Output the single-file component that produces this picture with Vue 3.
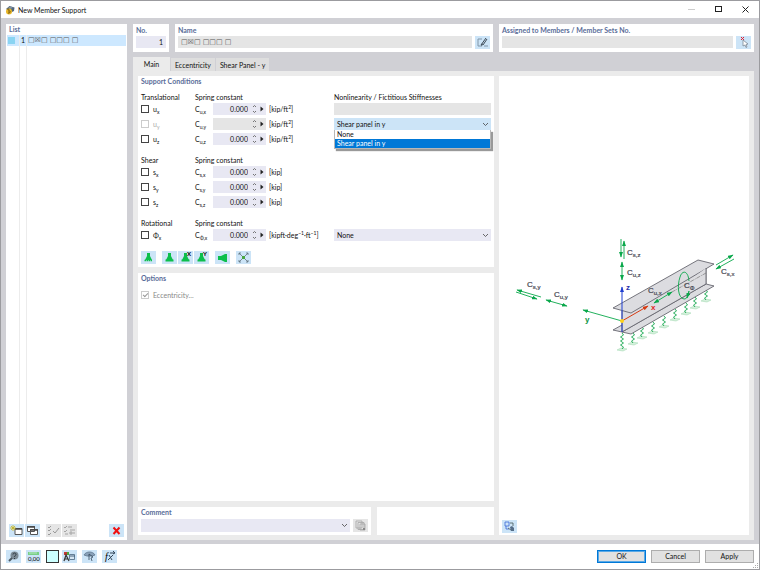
<template>
  <div class="dialog">
    <header class="title-bar">
      <svg class="app-icon" viewBox="0 0 20 20">
        <path d="M2 8 L9 2 L19 5 L18 12 L12 15 Z" fill="#50647a" />
        <path d="M6 5 L12 3 L16 6 L10 8 Z" fill="#8194a6" />
        <circle cx="8" cy="13" r="6" fill="#e9b727" />
        <path d="M5 9 C8 7 10 11 7 12 C12 11 11 17 6 16" fill="none" stroke="#6f5413" stroke-width="2" />
      </svg>
      <h1>New Member Support</h1>
      <div class="window-buttons">
        <button aria-label="Minimize" disabled>
          <svg viewBox="0 0 9 9"><path d="M1 4.5 H8" stroke="#ccc" /></svg>
        </button>
        <button aria-label="Maximize">
          <svg viewBox="0 0 9 9"><rect x="1.5" y="1.5" width="6" height="5" fill="none" stroke="#222" /></svg>
        </button>
        <button aria-label="Close">
          <svg viewBox="0 0 9 9"><path d="M1.5 1.5 L7.5 7.5 M7.5 1.5 L1.5 7.5" stroke="#222" /></svg>
        </button>
      </div>
    </header>

    <div class="body">
      <aside class="panel list-panel">
        <h2>List</h2>
        <ul class="support-list">
          <li v-for="item in supports" :key="item.no" class="selected">
            <span class="swatch"></span>
            <span class="item-no">{{ item.no }}</span>
            <span class="item-name boxes">{{ item.name }}</span>
          </li>
          <li class="filler"><span></span><span></span><span></span></li>
        </ul>
        <div class="tools list-tools">
          <button class="tool" aria-label="New">
            <svg viewBox="0 0 15 13">
              <path d="M6 4.500 h7 v6 h-7 z" fill="#fff" stroke="#555" />
              <path d="M6 5 h7" stroke="#444" stroke-width="1.500" />
              <path d="M4 1 v6 M1 4 h6 M2 2 l4 4 M6 2 l-4 4" stroke="#c9b51e" stroke-width="0.8" />
            </svg>
          </button>
          <button class="tool" aria-label="Copy">
            <svg viewBox="0 0 15 13">
              <path d="M2.500 2.500 h7 v5 h-7 z M5.500 5.500 h7 v5 h-7 z" fill="#fff" stroke="#555" />
              <path d="M2 3 h8 M5 6 h8" stroke="#444" stroke-width="1.500" />
            </svg>
          </button>
          <button class="tool off gap-before" aria-label="Select all" disabled>
            <svg viewBox="0 0 15 13">
              <path d="M2 3 l1 1 l2 -2 M2 6 l1 1 l2 -2 M2 10 l1 1 l2 -2 M7 7 l2 2 l4 -5" fill="none" stroke="#999" />
            </svg>
          </button>
          <button class="tool off" aria-label="Invert selection" disabled>
            <svg viewBox="0 0 15 13">
              <path d="M2 3 l1 1 l2 -2 M6 3 h4 M2 7 l1 1 l2 -2 M3 10 h3 M8 6 h5 M8 8 h2 v2 h-2 z M11 9 h2" fill="none" stroke="#a5a5a5" />
            </svg>
          </button>
          <button class="tool push" aria-label="Delete">
            <svg viewBox="0 0 15 13"><path d="M4.500 3.500 L10.500 10 M10.500 3.500 L4.500 10" stroke="#f01010" stroke-width="2" /></svg>
          </button>
        </div>
      </aside>

      <main class="main">
        <div class="head-row">
          <section class="panel">
            <h2><label for="no">No.</label></h2>
            <input id="no" v-model="no" class="field no-field" />
          </section>
          <section class="panel">
            <h2><label for="name">Name</label></h2>
            <div class="field-line">
              <input id="name" v-model="name" class="field gray boxes" readonly />
              <button class="tool" aria-label="Edit name">
                <svg viewBox="0 0 15 13">
                  <path d="M7 3 H3 V10 H7 M9 10 H13" fill="none" stroke="#8196a8" />
                  <path d="M6 9 L11 2 M8 9 L12 3" stroke="#3d4a56" />
                  <path d="M6 10 l1 -3 l1 2 z" fill="#3d4a56" />
                </svg>
              </button>
            </div>
          </section>
          <section class="panel">
            <h2><label for="assigned">Assigned to Members / Member Sets No.</label></h2>
            <div class="field-line">
              <input id="assigned" class="field gray" readonly />
              <button class="tool" aria-label="Pick members">
                <svg viewBox="0 0 15 13">
                  <path d="M5 1 L8 4 M8 1 L5 4" stroke="#e02030" />
                  <path d="M7 4 L12 8 L10 8.500 L11 11 L10 11.500 L9 9 L7 10 Z" fill="#fff" stroke="#7c8896" stroke-width="0.8" />
                </svg>
              </button>
            </div>
          </section>
        </div>

        <nav class="tabs" role="tablist">
          <button
            v-for="tab in tabs"
            :key="tab"
            role="tab"
            :aria-selected="tab === activeTab"
            :class="{ active: tab === activeTab }"
            @click="activeTab = tab"
          >
            {{ tab }}
          </button>
        </nav>

        <div class="pane">
          <div class="pane-left">
            <section class="panel conditions">
              <h2>Support Conditions</h2>

              <div v-for="group in groups" :key="group.title" class="group">
                <div class="row head">
                  <span class="group-title">{{ group.title }}</span>
                  <span class="constant-title">Spring constant</span>
                  <span v-if="group.nonlinear" class="nonlinear-title">Nonlinearity / Fictitious Stiffnesses</span>
                </div>
                <div v-for="row in group.rows" :key="row.id" class="row">
                  <input :id="row.id" v-model="row.checked" type="checkbox" :disabled="row.disabled" />
                  <label :for="row.id" :class="{ dim: row.disabled }">{{ row.symbol }}<sub>{{ row.axis }}</sub></label>
                  <label :for="row.id + '-c'">C<sub>{{ row.constant }}</sub></label>
                  <div class="spin" :class="{ gray: row.disabled }">
                    <input :id="row.id + '-c'" v-model="row.value" :disabled="row.disabled" />
                    <svg class="stepper" viewBox="0 0 5 12">
                      <path d="M1 4 L2.500 2.500 L4 4 M1 8 L2.500 9.500 L4 8" fill="none" stroke="#666" stroke-width="0.9" />
                    </svg>
                    <button aria-label="More">
                      <svg viewBox="0 0 4 6"><path d="M0.500 0.500 L3.500 3 L0.500 5.500 Z" fill="#222" /></svg>
                    </button>
                  </div>
                  <span class="unit">
                    <template v-for="(part, i) in row.unit" :key="i"><sup v-if="i % 2">{{ part }}</sup><template v-else>{{ part }}</template></template>
                  </span>
                  <div v-if="row.choice === ''" class="field gray"></div>
                  <div v-else-if="row.choice" class="combo" :class="{ open: row.open }">
                    <select v-model="row.choice" aria-label="Nonlinearity" @mousedown.prevent="row.open = !row.open">
                      <option v-for="option in options" :key="option">{{ option }}</option>
                    </select>
                    <svg class="chevron" viewBox="0 0 7 5"><path d="M1 1 L3.500 3.500 L6 1" fill="none" stroke="#444" stroke-width="0.8" /></svg>
                    <ul v-if="row.open" class="menu" role="listbox">
                      <li
                        v-for="option in options"
                        :key="option"
                        role="option"
                        :aria-selected="option === row.choice"
                        :class="{ picked: option === row.choice }"
                        @click="choose(row, option)"
                      >
                        {{ option }}
                      </li>
                    </ul>
                  </div>
                </div>
              </div>

              <div class="tools support-tools">
                <button
                  v-for="preset in presets"
                  :key="preset.label"
                  class="tool"
                  :class="{ 'gap-before': preset.apart }"
                  :aria-label="preset.label"
                >
                  <svg viewBox="0 0 15 13">
                    <template v-if="preset.kind === 'up'">
                      <path d="M6 2 h3 v3 l2 4 h-7 l2 -4 z" fill="#0cbf4c" />
                      <path v-if="preset.dashed" d="M3.500 9.500 h8" stroke="#0cbf4c" stroke-width="1.500" stroke-dasharray="1.500 0.500" />
                      <path v-else d="M3.500 8.500 h8 v2 h-8 z" fill="#0cbf4c" />
                      <text v-if="preset.letter" x="9" y="5">{{ preset.letter }}</text>
                    </template>
                    <path v-else-if="preset.kind === 'side'" d="M3 5 h3 l4 -2 h2 v8 h-2 l-4 -2 h-3 z" fill="#0cbf4c" />
                    <template v-else>
                      <path d="M3 2 L12 11 M12 2 L3 11" stroke="#61717c" stroke-width="0.8" />
                      <path d="M3 4 V2 H5 M10 2 H12 V4 M12 9 V11 H10 M5 11 H3 V9" fill="none" stroke="#61717c" stroke-width="0.8" />
                      <rect x="6" y="5" width="3" height="3" fill="#49a53f" />
                    </template>
                  </svg>
                </button>
              </div>
            </section>

            <section class="panel options">
              <h2>Options</h2>
              <div class="check-line">
                <input id="ecc" type="checkbox" checked disabled />
                <label for="ecc">Eccentricity...</label>
              </div>
            </section>

            <div class="bottom-row">
              <section class="panel comment">
                <h2><label for="comment">Comment</label></h2>
                <div class="field-line">
                  <div class="combo">
                    <select id="comment"><option></option></select>
                    <svg class="chevron" viewBox="0 0 7 5"><path d="M1 1 L3.500 3.500 L6 1" fill="none" stroke="#444" stroke-width="0.8" /></svg>
                  </div>
                  <button class="tool off" aria-label="Comment templates" disabled>
                    <svg viewBox="0 0 15 13">
                      <path d="M3 2 h6 v7 h-6 z M5 3.500 h6 v7 h-6 z M7 5 h5 v6 h-5 z" fill="#e5e5e5" stroke="#a5a5a5" stroke-width="0.8" />
                      <path d="M10 9 h2 v2 h-2 z" fill="#888" />
                    </svg>
                  </button>
                </div>
              </section>
              <section class="panel blank"></section>
            </div>
          </div>

          <section class="panel preview">
            <div class="drawing">
              <svg viewBox="0 0 250 140" role="img" aria-label="Member support diagram">
                <defs>
                  <marker id="g" markerUnits="userSpaceOnUse" markerWidth="6" markerHeight="4" refX="5" refY="2" orient="auto-start-reverse">
                    <path d="M0 0 L5.500 2 L0 4 Z" fill="#0aa84b" />
                  </marker>
                  <marker id="b" markerUnits="userSpaceOnUse" markerWidth="6" markerHeight="4" refX="5" refY="2" orient="auto">
                    <path d="M0 0 L5.500 2 L0 4 Z" fill="#1f3fd0" />
                  </marker>
                  <marker id="r" markerUnits="userSpaceOnUse" markerWidth="6" markerHeight="4" refX="5" refY="2" orient="auto">
                    <path d="M0 0 L5.500 2 L0 4 Z" fill="#d63a12" />
                  </marker>
                </defs>

                <g class="springs">
                  <g v-for="s in springs" :key="s.x">
                    <path :d="`M${s.x - 5} ${s.y + 1} l4 -2 l6 1 l-4 2 z`" class="foot" />
                    <path :d="springPath(s)" />
                  </g>
                </g>

                <g class="beam">
                  <path d="M114 102 L123 97 L207 56 L215 58 L132 106 Z" />
                  <path d="M123 83 L207 36 V56 L123 104 Z" />
                  <path d="M114 80 L199 32 L215 36 L132 85 Z" />
                  <path d="M123 104 L207 56 V40" fill="none" />
                </g>

                <path d="M173 64 L207 45" class="axis-line" />
                <g class="green">
                  <path d="M122 11 V29" marker-end="url(#g)" />
                  <path d="M125 31 V13" marker-end="url(#g)" />
                  <path d="M123 34 V52" marker-start="url(#g)" marker-end="url(#g)" />
                  <path d="M42 69 L18 62" marker-end="url(#g)" />
                  <path d="M17 64 L38 71" marker-end="url(#g)" />
                  <path d="M47 72 L68 78" marker-start="url(#g)" marker-end="url(#g)" />
                  <path d="M155 75 L173 64" marker-start="url(#g)" marker-end="url(#g)" />
                  <path d="M217 37 L234 27" marker-end="url(#g)" />
                  <path d="M235 31 L217 41" marker-end="url(#g)" />
                  <path d="M123 93 L84 82" marker-end="url(#g)" />
                  <path d="M190 53 C189 42 183 42 181 49 C178 58 179 70 185 71 C188 71 189 68 190 63" />
                  <path d="M190 63 L188 70" marker-end="url(#g)" />
                </g>
                <path d="M123 104 V59" stroke="#1f3fd0" marker-end="url(#b)" />
                <path d="M123 93 L149 78" stroke="#d63a12" marker-end="url(#r)" />
                <circle cx="123" cy="93" r="2" fill="#ffd21c" />

                <text v-for="t in tags" :key="t.sub" :x="t.x" :y="t.y" class="tag">C<tspan dy="2" class="tag-sub">{{ t.sub }}</tspan></text>
                <text x="86" y="94" class="axis y-axis">y</text>
                <text x="127" y="62" class="axis z-axis">z</text>
                <text x="152" y="82" class="axis x-axis">x</text>
              </svg>
            </div>
            <button class="tool" aria-label="View settings">
              <svg viewBox="0 0 15 13">
                <path d="M3 2 h4 v4 h-4 z M4 6 v3 h3" fill="none" stroke="#3a68d8" stroke-width="0.8" />
                <path d="M8 3 h3 v3 M6 8 l3 2" fill="none" stroke="#455" stroke-width="0.8" />
                <path d="M8 7 L10 6 L12 8 V11 L9 11 Z" fill="#556d88" />
              </svg>
            </button>
          </section>
        </div>
      </main>
    </div>

    <footer class="footer">
      <button class="tool" aria-label="Help">
        <svg viewBox="0 0 15 13">
          <circle cx="8.500" cy="5.500" r="4" fill="#7c8b97" />
          <path d="M6 8 L3 11" stroke="#4d5a65" stroke-width="2" />
          <path d="M7 4.500 C7 2.500 10 2.500 10 4.500 C10 5.500 8.500 5.500 8.500 7 M8.500 8 V9" fill="none" stroke="#2e3942" />
        </svg>
      </button>
      <button class="tool" aria-label="Units">
        <svg viewBox="0 0 15 13">
          <path d="M2 2 h11 v3 h-11 z" fill="#78cf86" />
          <path d="M4 2 v2 M6 2 v2 M8 2 v2 M10 2 v2" stroke="#fff" stroke-width="0.5" />
          <text x="2" y="11" class="digits">0,00</text>
        </svg>
      </button>
      <div class="color-tools">
        <button class="color" aria-label="Color"></button>
        <button class="tool" aria-label="Display">
          <svg viewBox="0 0 15 13">
            <path d="M2 2 h3 v3 h-3 z" fill="#c23b32" />
            <path d="M5 2 h2 v3 h-2 z" fill="#49a53f" />
            <path d="M2 11 L4 5 L7 11 M3 9 H6" fill="none" stroke="#333" stroke-width="1.200" />
            <path d="M7.500 4.500 h5 v5 h-5 z" fill="#d6e6f3" stroke="#49647e" stroke-width="0.8" />
            <path d="M8 6 h5" stroke="#49647e" />
          </svg>
        </button>
      </div>
      <button class="tool" aria-label="View">
        <svg viewBox="0 0 15 13">
          <path d="M2 5 C4 1 11 1 13 5 L10 6 H5 Z" fill="#8aa2ba" stroke="#5d758d" stroke-width="0.8" />
          <path d="M7 4 L11 7 L9 8 L10 11 M7 4 V10" fill="none" stroke="#33465a" stroke-width="0.8" />
        </svg>
      </button>
      <button class="tool" aria-label="Formula">
        <svg viewBox="0 0 15 13">
          <text x="3" y="10" class="formula">f</text>
          <path d="M7 5 L10 10 M11 5 L6 10 M8 3 h4 M11 1 l2 2 l-2 1" fill="none" stroke="#33465a" />
        </svg>
      </button>
      <div class="actions">
        <button class="primary">OK</button>
        <button>Cancel</button>
        <button>Apply</button>
      </div>
      <svg class="grip" viewBox="0 0 6 6">
        <path d="M4 0 h1 v1 h-1 z M4 2 h1 v1 h-1 z M4 4 h1 v1 h-1 z M2 2 h1 v1 h-1 z M2 4 h1 v1 h-1 z M0 4 h1 v1 h-1 z" fill="#aaa" />
      </svg>
    </footer>
  </div>
</template>

<script setup>
import { ref, reactive } from 'vue'

const supports = [{ no: 1, name: '□☒□ □□□ □' }]
const no = ref('1')
const name = ref('□☒□ □□□ □')

const tabs = ['Main', 'Eccentricity', 'Shear Panel - y']
const activeTab = ref('Main')

const options = ['None', 'Shear panel in y']

const area = ['[kip/ft', '2', ']']
const force = ['[kip]']

const groups = reactive([
  {
    title: 'Translational',
    nonlinear: true,
    rows: [
      { id: 'ux', symbol: 'u', axis: 'x', constant: 'u,x', value: '0.000', unit: area, choice: '' },
      { id: 'uy', symbol: 'u', axis: 'y', constant: 'u,y', value: '', unit: area, choice: 'Shear panel in y', open: true, disabled: true },
      { id: 'uz', symbol: 'u', axis: 'z', constant: 'u,z', value: '0.000', unit: area }
    ]
  },
  {
    title: 'Shear',
    rows: [
      { id: 'sx', symbol: 's', axis: 'x', constant: 's,x', value: '0.000', unit: force },
      { id: 'sy', symbol: 's', axis: 'y', constant: 's,y', value: '0.000', unit: force },
      { id: 'sz', symbol: 's', axis: 'z', constant: 's,z', value: '0.000', unit: force }
    ]
  },
  {
    title: 'Rotational',
    rows: [
      { id: 'phi', symbol: 'Φ', axis: 'x', constant: 'Φ,x', value: '0.000', unit: ['[kipft·deg', '−1', '·ft', '−1', ']'], choice: 'None' }
    ]
  }
])

const presets = [
  { label: 'Free support', kind: 'up', dashed: true },
  { label: 'Fixed support', kind: 'up', apart: true },
  { label: 'Support in X', kind: 'up', letter: 'X' },
  { label: 'Support in Y', kind: 'up', letter: 'Y' },
  { label: 'Side support', kind: 'side', apart: true },
  { label: 'No support', kind: 'none', apart: true }
]

const springs = [
  { x: 123, y: 121, h: 16 },
  { x: 134, y: 115, h: 10 },
  { x: 143, y: 109, h: 10 },
  { x: 154, y: 104, h: 10 },
  { x: 165, y: 98, h: 10 },
  { x: 176, y: 91, h: 10 },
  { x: 187, y: 85, h: 10 },
  { x: 196, y: 79, h: 10 },
  { x: 207, y: 72, h: 10 }
]

const tags = [
  { sub: 's,z', x: 128, y: 27 },
  { sub: 'u,z', x: 128, y: 47 },
  { sub: 's,x', x: 222, y: 46 },
  { sub: 'u,x', x: 149, y: 65 },
  { sub: 'Φ', x: 185, y: 60 },
  { sub: 's,y', x: 28, y: 59 },
  { sub: 'u,y', x: 55, y: 69 }
]

const springPath = (s) => {
  let d = `M${s.x} ${s.y - s.h}`
  for (let y = s.y - s.h + 2, side = 1; y < s.y - 1; y += 2, side = -side) {
    d += ` L${s.x + side * 1.5} ${y}`
  }
  return d + ` L${s.x} ${s.y}`
}

const choose = (row, option) => {
  row.choice = option
  row.open = false
}
</script>

<style>
body {
  margin: 0;
}
</style>

<style scoped>
* {
  box-sizing: border-box;
}

.dialog {
  min-height: 100vh;
  display: flex;
  flex-direction: column;
  border: 1px solid #9b9b9f;
  background: #fff;
  color: #111;
  font-family: Lato, "Open Sans", sans-serif;
  font-size: 7px;
  line-height: 12px;
}

button,
input,
select {
  font: inherit;
  color: inherit;
  margin: 0;
  padding: 0;
  border: 0;
  border-radius: 0;
}

ul {
  list-style: none;
  margin: 0;
  padding: 0;
}

svg {
  display: block;
}

h2 {
  margin: 0;
  font-size: 7px;
  line-height: 11px;
  font-weight: 700;
  color: #5a6d99;
}

sub,
sup {
  font-size: 5px;
  line-height: 0;
}

.title-bar {
  height: 17px;
  display: flex;
  align-items: center;
  padding-left: 4px;
}

.app-icon {
  width: 10px;
  height: 10px;
}

h1 {
  margin: 0 0 0 3px;
  font-size: 7px;
  font-weight: 400;
  flex: 1;
}

.window-buttons {
  display: flex;
}

.window-buttons button {
  width: 27px;
  height: 17px;
  background: none;
  display: flex;
  align-items: center;
  justify-content: center;
}

.window-buttons svg {
  width: 9px;
  height: 9px;
}

.body {
  flex: 1;
  display: flex;
  gap: 6px;
  padding: 6px 5px 4px;
  background: #d0d0d5;
}

.panel {
  background: #fff;
  padding: 0 3px;
}

.list-panel {
  width: 121px;
  display: flex;
  flex-direction: column;
  padding: 0 1px 3px;
}

.list-panel h2 {
  padding-left: 2px;
}

.support-list {
  flex: 1;
  display: flex;
  flex-direction: column;
}

.support-list li {
  display: grid;
  grid-template-columns: 12px 7px 1fr;
  height: 11px;
  line-height: 11px;
}

.support-list li span + span {
  border-left: 1px solid #ececec;
}

.support-list li.filler {
  flex: 1;
}

.support-list li.selected {
  background: #cde8ff;
}

.support-list .swatch {
  width: 7px;
  height: 7px;
  margin: 2px 1px;
  background: #8ad4f2;
}

.support-list .item-no {
  text-align: center;
}

.support-list .item-name {
  padding-left: 1px;
}

.boxes {
  font-family: "DejaVu Sans", sans-serif;
  color: #555;
}

.tools {
  display: flex;
  gap: 1px;
}

.tool {
  width: 15px;
  height: 13px;
  flex: none;
  background: #cce4f7;
}

.tool.off {
  background: #e5e5e5;
}

.tool svg {
  width: 15px;
  height: 13px;
}

.gap-before {
  margin-left: 5px;
}

.push {
  margin-left: auto;
}

.list-tools {
  padding: 0 2px;
}

.main {
  flex: 1;
  display: flex;
  flex-direction: column;
}

.head-row {
  display: grid;
  grid-template-columns: 36px 318fr 255fr;
  gap: 6px;
}

.head-row .panel {
  height: 28px;
  padding-top: 1px;
}

.field {
  display: block;
  width: 100%;
  height: 12px;
  padding: 0 3px;
  background: #e8e8f3;
}

.gray {
  background: #e5e5e5;
}

.no-field {
  text-align: right;
}

.field-line {
  display: flex;
  gap: 3px;
}

.tabs {
  display: flex;
  align-items: flex-end;
  margin-top: 5px;
}

.tabs button {
  height: 13px;
  padding: 0 4px;
  background: #dedede;
  border-left: 1px solid #d0d0d5;
}

.tabs button.active {
  height: 14px;
  min-width: 37px;
  border: 0;
  background: #ebebeb;
}

.pane {
  flex: 1;
  display: grid;
  grid-template-columns: 356fr 250fr;
  gap: 5px;
  padding: 5px;
  background: #ebebeb;
}

.pane-left {
  display: flex;
  flex-direction: column;
  gap: 6px;
}

.conditions {
  padding-bottom: 3px;
}

.group {
  display: flex;
  flex-direction: column;
  gap: 3px;
  margin-top: 9px;
}

h2 + .group {
  margin-top: 4px;
}

.row {
  display: grid;
  grid-template-columns: 12px 42px 18px 53px 68px 1fr;
  align-items: center;
  height: 12px;
}

.row.head {
  margin-bottom: -3px;
}

.group-title {
  grid-column: 1 / 3;
}

.constant-title {
  grid-column: 3 / 6;
}

.nonlinear-title {
  grid-column: 6;
}

input[type="checkbox"] {
  appearance: none;
  width: 8px;
  height: 8px;
  border: 1px solid #444;
  background: #fff;
}

input[type="checkbox"]:disabled {
  border-color: #ccc;
}

input[type="checkbox"]:checked::after {
  content: "";
  display: block;
  width: 4px;
  height: 2px;
  margin: 1px;
  border-left: 1px solid #999;
  border-bottom: 1px solid #999;
  transform: rotate(-45deg);
}

.dim {
  color: #aaa;
}

.spin {
  display: flex;
  align-items: center;
  height: 12px;
  background: #e8e8f3;
}

.spin.gray {
  background: #e5e5e5;
}

.spin input {
  flex: 1;
  min-width: 0;
  height: 12px;
  text-align: right;
  background: none;
}

.stepper {
  width: 5px;
  height: 12px;
  margin: 0 3px 0 4px;
}

.spin button {
  width: 6px;
  background: none;
}

.spin button svg {
  width: 4px;
  height: 6px;
}

.unit {
  padding-left: 3px;
  white-space: nowrap;
}

.combo {
  position: relative;
  flex: 1;
  background: #e8e8f3;
}

.combo.open {
  background: #cce4f7;
}

.combo select {
  display: block;
  appearance: none;
  width: 100%;
  height: 12px;
  padding: 0 3px;
  background: none;
}

.chevron {
  position: absolute;
  right: 2px;
  top: 4px;
  width: 7px;
  height: 5px;
  pointer-events: none;
}

.menu {
  position: absolute;
  z-index: 1;
  top: 100%;
  left: 0;
  right: 0;
  border: 1px solid #b8b8b8;
  border-top: 0;
  background: #fff;
  box-shadow: 2px 2px 1px rgba(0, 0, 0, 0.4);
  line-height: 9px;
}

.menu li {
  padding: 0 2px;
}

.menu li.picked {
  background: #0078d7;
  color: #fff;
}

.support-tools {
  margin-top: 10px;
}

.options {
  flex: 1;
}

.check-line {
  display: flex;
  align-items: center;
  gap: 4px;
  margin-top: 5px;
  color: #888;
}

.bottom-row {
  display: grid;
  grid-template-columns: 233fr 117fr;
  gap: 6px;
}

.comment {
  padding-bottom: 3px;
}

.comment h2 {
  margin-bottom: 1px;
}

.comment .combo {
  height: 13px;
}

.preview {
  display: flex;
  flex-direction: column;
  padding-bottom: 2px;
}

.drawing {
  flex: 1;
  display: flex;
  align-items: center;
  margin: 0 -3px;
}

.drawing svg {
  width: 100%;
}

.springs path {
  fill: none;
  stroke: #16a84f;
  stroke-width: 0.9;
}

.springs .foot {
  fill: #d5f0dc;
  stroke: #a8dcb7;
  stroke-width: 0.6;
}

.beam path {
  fill: #dcdce0;
  stroke: #66666f;
  stroke-width: 0.9;
}

.axis-line {
  stroke: #777;
  stroke-width: 0.7;
  stroke-dasharray: 4 1 1 1;
}

.green path {
  fill: none;
  stroke: #0aa84b;
  stroke-width: 0.9;
}

.tag,
.axis {
  font-family: "Liberation Sans", sans-serif;
  font-size: 8px;
  fill: #44444e;
}

.tag {
  stroke: #44444e;
  stroke-width: 0.2;
}

.tag-sub {
  font-size: 6px;
}

.axis {
  font-weight: 700;
}

.y-axis {
  fill: #0a9444;
}

.z-axis {
  fill: #2c2fa8;
}

.x-axis {
  fill: #e02424;
}

.support-tools text {
  font-size: 6px;
  font-weight: 700;
}

.footer {
  position: relative;
  display: flex;
  align-items: center;
  gap: 5px;
  height: 25px;
  padding: 0 5px;
}

.color-tools {
  display: flex;
  gap: 3px;
}

.color {
  width: 13px;
  height: 13px;
  border: 1px solid #333;
  background: #ccffff;
}

.digits {
  font-size: 6px;
}

.formula {
  font-family: "Liberation Serif", serif;
  font-size: 10px;
  font-style: italic;
}

.actions {
  display: flex;
  gap: 5px;
  margin-left: auto;
}

.actions button {
  width: 49px;
  height: 13px;
  line-height: 11px;
  border: 1px solid #adadad;
  background: #e1e1e1;
}

.actions .primary {
  border: 1px solid #0078d7;
  box-shadow: inset 0 0 0 1px #5aa9e6;
}

.grip {
  position: absolute;
  right: 0;
  bottom: 0;
  width: 6px;
  height: 6px;
}
</style>
